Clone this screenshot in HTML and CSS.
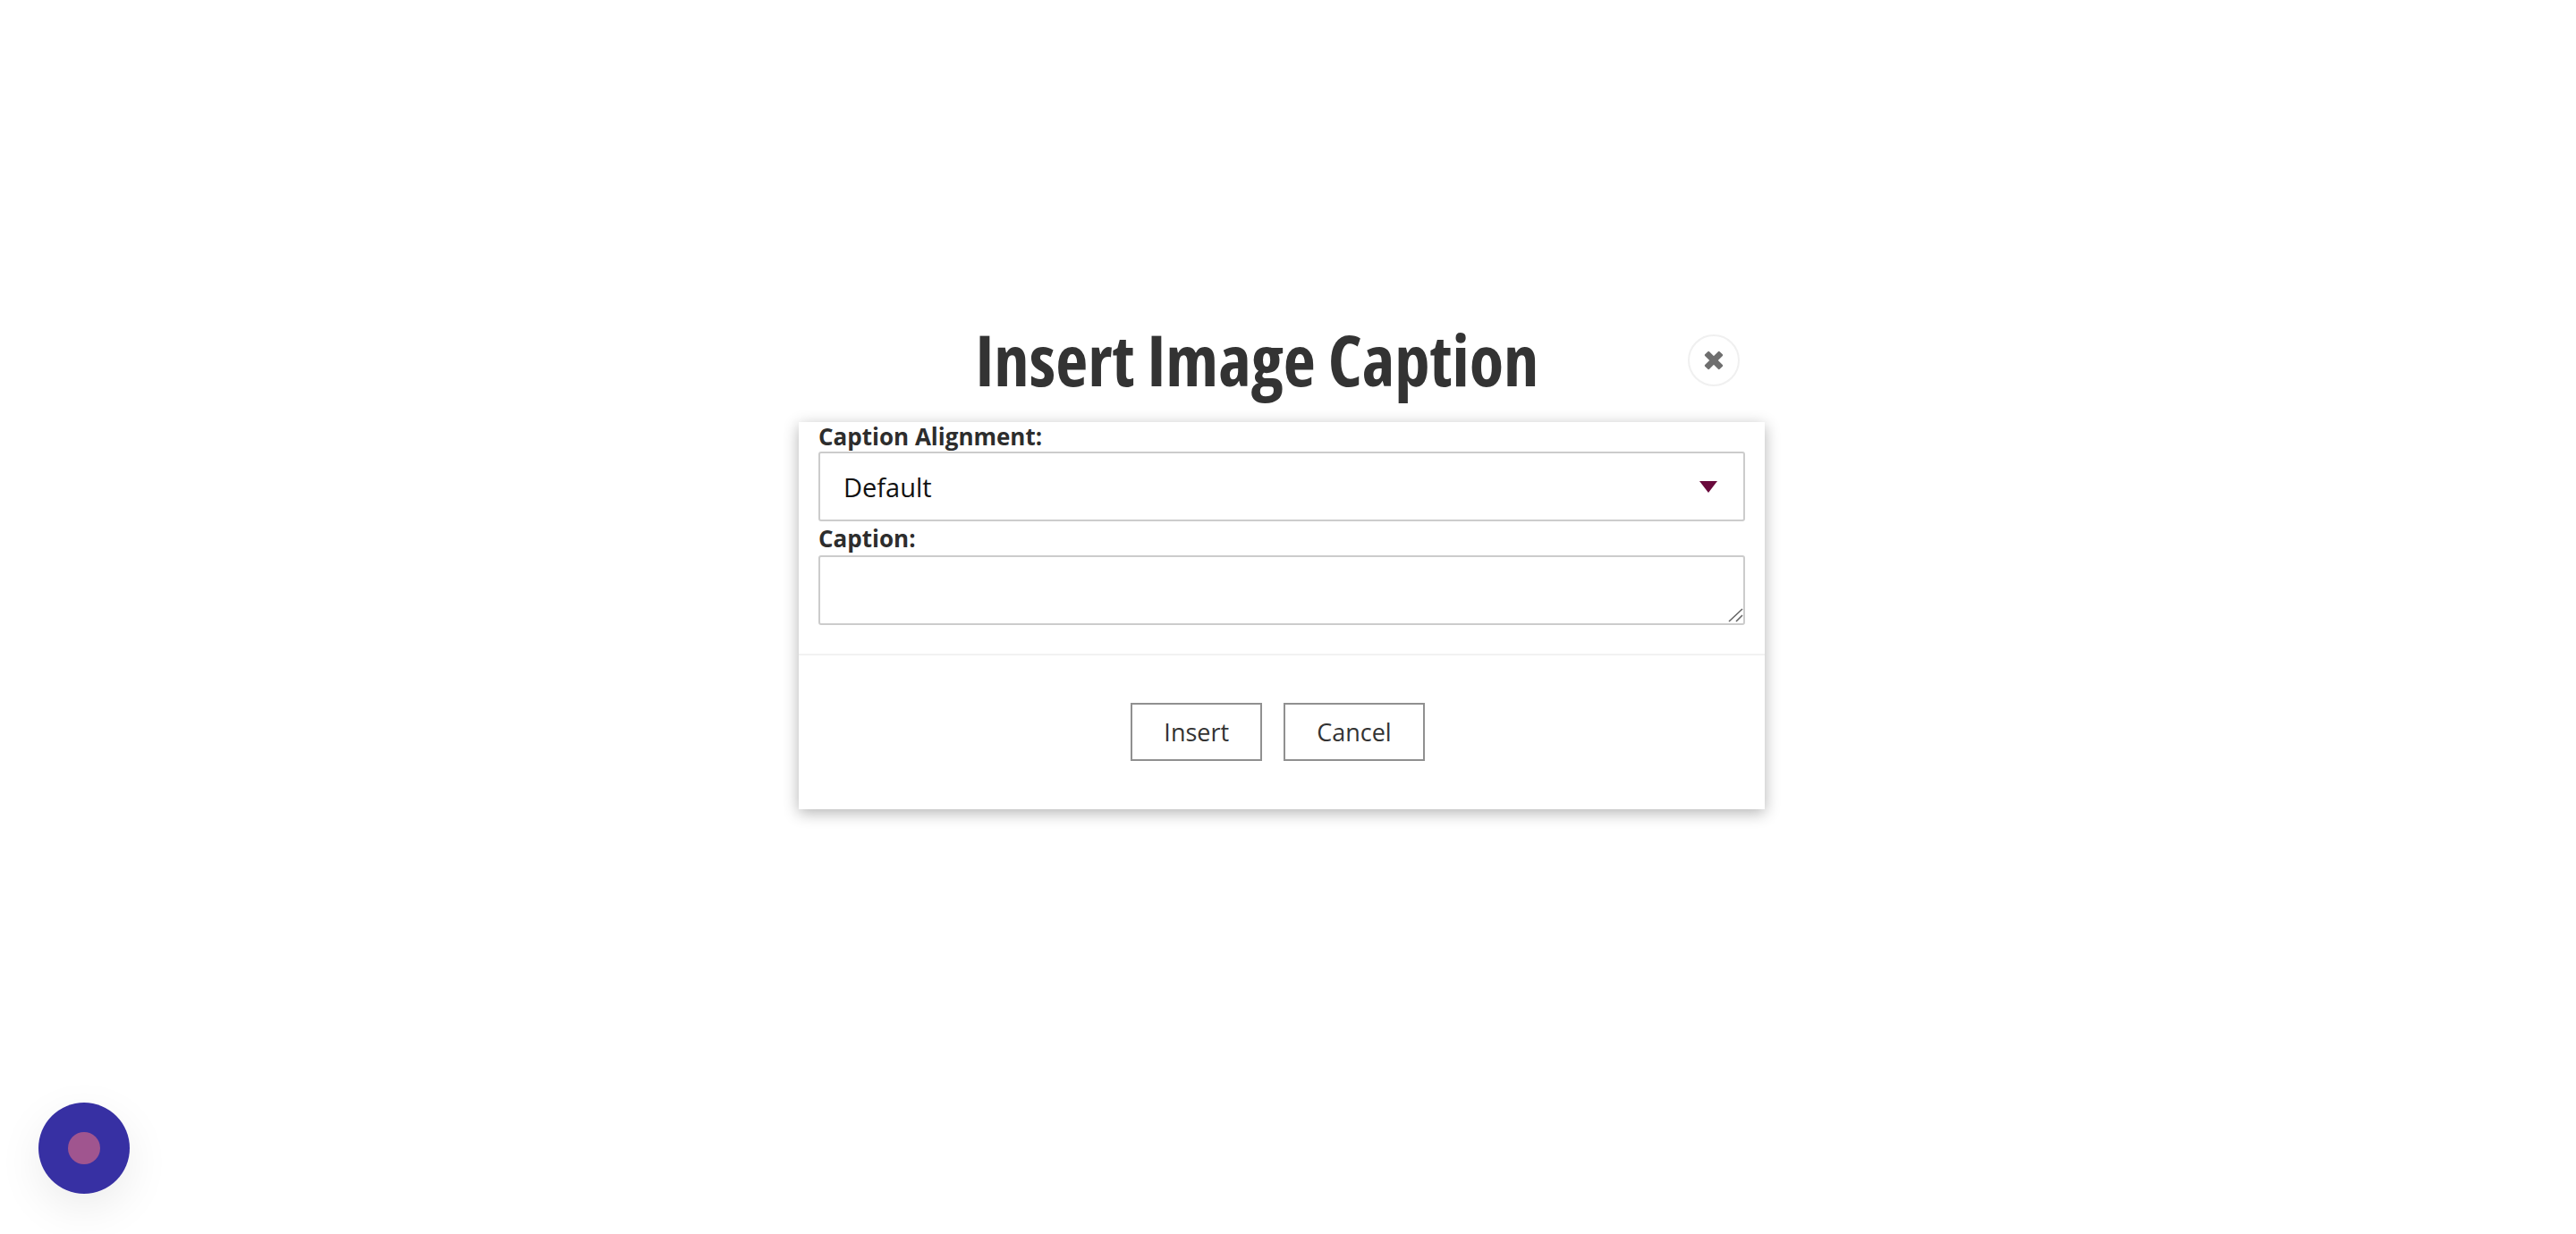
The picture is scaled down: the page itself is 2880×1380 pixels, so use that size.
FILE: index.html
```html
<!DOCTYPE html>
<html lang="en">
<head>
<meta charset="utf-8">
<title>Insert Image Caption</title>
<link rel="stylesheet" href="styles.css">
</head>
<body>
<main class="page">
  <section class="dialog">
    <header class="dialog-head">
      <h1 class="dialog-title">Insert Image Caption</h1>
      <button class="close" type="button" aria-label="Close">
        <svg viewBox="0 0 24 24" width="24" height="24"><path d="M3 6.2 6.2 3 12 8.8 17.8 3 21 6.2 15.2 12 21 17.8 17.8 21 12 15.2 6.2 21 3 17.8 8.8 12Z" fill="#6f6f6f" stroke="#6f6f6f" stroke-width="2.4" stroke-linejoin="round"/></svg>
      </button>
    </header>
    <div class="card">
      <div class="fields">
        <label class="label">Caption Alignment:</label>
        <div class="select">
          <span class="select-value">Default</span>
          <span class="caret"></span>
        </div>
        <label class="label label-gap">Caption:</label>
        <div class="textarea-wrap">
          <textarea class="textarea"></textarea>
          <svg class="grip" viewBox="0 0 20 20" width="20" height="20"><path d="M2 16 17 2M10 16 17 9" fill="none" stroke="#666" stroke-width="1.6"/></svg>
        </div>
      </div>
      <div class="actions">
        <button class="btn" type="button">Insert</button>
        <button class="btn" type="button">Cancel</button>
      </div>
    </div>
  </section>
</main>
<button class="fab" type="button" aria-label="Open"><span class="fab-dot"></span></button>
</body>
</html>
```
FILE: styles.css
```css
* { box-sizing: border-box; }
html, body { margin: 0; height: 100%; background: #fff; overflow: hidden; }
body { font-family: "Open Sans", "Liberation Sans", sans-serif; color: #333; }
.page { display: flex; justify-content: center; padding-top: 359px; padding-right: 14px; }
.dialog { width: 1080px; }
.dialog-head { position: relative; height: 113px; padding-right: 55px; display: flex; justify-content: center; align-items: flex-start; }
.dialog-title { margin: -1px 0 0; font-size: 78.7px; line-height: 88px; font-weight: 700; font-stretch: 75%; color: #333; white-space: nowrap; }
.close { position: absolute; left: 994px; top: 15px; width: 58px; height: 58px; padding: 0; border: 2px solid #f0f0f0; border-radius: 50%; background: #fff; display: flex; align-items: center; justify-content: center; }
.card { background: #fff; box-shadow: 0 4px 16px rgba(0,0,0,.3); }
.fields { padding: 0 22px 32px; border-bottom: 2px solid #f2f2f2; }
.label { display: block; font-size: 26px; line-height: 33px; font-weight: 700; color: #2d2d2d; }
.label-gap { margin: 3px 0 2px; }
.select { height: 78px; border: 2px solid #ccc; border-radius: 3px; display: flex; align-items: center; justify-content: space-between; padding: 0 29px 0 26px; }
.select-value { font-size: 29px; color: #111; }
.caret { width: 0; height: 0; border-left: 10px solid transparent; border-right: 10px solid transparent; border-top: 13px solid #6a0a3c; }
.textarea-wrap { position: relative; }
.textarea { display: block; width: 100%; height: 78px; margin: 0; border: 2px solid #ccc; border-radius: 3px; background: #fff; outline: none; padding: 8px; font: inherit; resize: none; }
.grip { position: absolute; right: 0; bottom: 0; }
.actions { display: flex; justify-content: center; gap: 24px; padding: 53px 9px 54px 0; }
.btn { height: 65px; padding: 0 35px; background: #fff; border: 2px solid #909090; border-radius: 0; font-family: inherit; font-size: 27px; color: #333; }
.fab { position: fixed; left: 43px; bottom: 45px; width: 102px; height: 102px; padding: 0; border: 0; border-radius: 50%; background: #3730a3; box-shadow: 0 16px 50px rgba(0,0,0,.08); display: flex; align-items: center; justify-content: center; }
.fab-dot { width: 36px; height: 36px; border-radius: 50%; background: #a0558f; }
```
